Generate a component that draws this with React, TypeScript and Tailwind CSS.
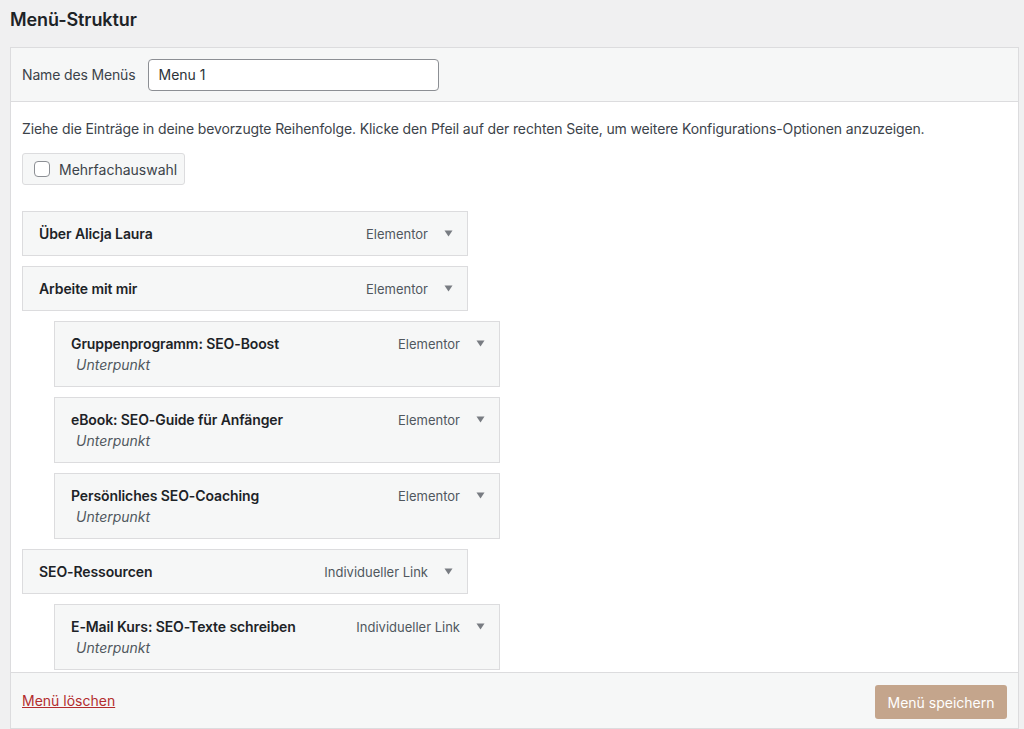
import React from "react";

const font = { fontFamily: "Inter, 'Liberation Sans', sans-serif" };

function Arrow() {
  return (
    <svg width="9" height="7" viewBox="0 0 9 7" className="shrink-0">
      <path d="M0.5 0.5 L8.5 0.5 L4.5 6.5 Z" fill="#787c82" />
    </svg>
  );
}

function Item({ title, type, sub }: { title: string; type: string; sub?: boolean }) {
  return (
    <div className={`${sub ? "ml-8" : ""} w-[446px] border border-[#dcdcde] bg-[#f6f7f7] pl-[16px] pr-[14px] ${sub ? "pt-[9px] pb-[11px]" : "pt-[9px] pb-[10px]"}`}>
      <div className="flex h-6 items-center">
        <span className="flex-1 text-[14px] font-semibold tracking-[-0.1px] text-[#1d2327]">{title}</span>
        <span className="mt-[3px] text-[13px] text-[#50575e]">{type}</span>
        <span className="ml-[16px]"><Arrow /></span>
      </div>
      {sub && (
        <div className="h-5 pl-[5px] text-[14px] italic leading-5 text-[#50575e]">Unterpunkt</div>
      )}
    </div>
  );
}

export default function App() {
  return (
    <div className="min-h-[729px] bg-[#f0f0f1] pl-[10px] pr-[5px]" style={font}>
      <h2 className="flex h-[47px] items-start pt-[6px] text-[18px] font-semibold tracking-[-0.1px] text-[#1d2327]">Menü-Struktur</h2>
      <div className="border border-[#dcdcde] bg-white">
        <div className="flex h-[54px] items-center border-b border-[#dcdcde] bg-[#f6f7f7] px-[11px]">
          <span className="text-[14px] tracking-[-0.15px] text-[#3c434a]">Name des Menüs</span>
          <div className="ml-[13px] flex h-[32px] w-[291px] items-center rounded-[4px] border border-[#8c8f94] bg-white px-[9px] text-[14px] text-[#2c3338]">Menu 1</div>
        </div>
        <div className="px-[11px] pt-[17px] pb-[2px]">
          <p className="text-[14px] leading-5 tracking-[-0.13px] text-[#3c434a]">Ziehe die Einträge in deine bevorzugte Reihenfolge. Klicke den Pfeil auf der rechten Seite, um weitere Konfigurations-Optionen anzuzeigen.</p>
          <div className="mt-[14px] flex h-[32px] w-[163px] items-center rounded-[3px] border border-[#dcdcde] bg-[#f6f7f7] pl-[11px]">
            <span className="h-4 w-4 rounded-[4px] border border-[#8c8f94] bg-white" />
            <span className="ml-[9px] text-[14px] text-[#3c434a]">Mehrfachauswahl</span>
          </div>
          <div className="mt-[26px] flex flex-col gap-[10px]">
            <Item title="Über Alicja Laura" type="Elementor" />
            <Item title="Arbeite mit mir" type="Elementor" />
            <Item title="Gruppenprogramm: SEO-Boost" type="Elementor" sub />
            <Item title="eBook: SEO-Guide für Anfänger" type="Elementor" sub />
            <Item title="Persönliches SEO-Coaching" type="Elementor" sub />
            <Item title="SEO-Ressourcen" type="Individueller Link" />
            <Item title="E-Mail Kurs: SEO-Texte schreiben" type="Individueller Link" sub />
          </div>
        </div>
        <div className="flex h-[56px] items-center justify-between border-t border-[#dcdcde] bg-[#f6f7f7] pl-[11px] pr-[11px]">
          <a className="text-[14px] text-[#b32d2e] underline">Menü löschen</a>
          <button className="mt-[3px] h-[34px] w-[132px] rounded-[3px] bg-[#c4a58c] text-[14px] text-white">Menü speichern</button>
        </div>
      </div>
    </div>
  );
}
